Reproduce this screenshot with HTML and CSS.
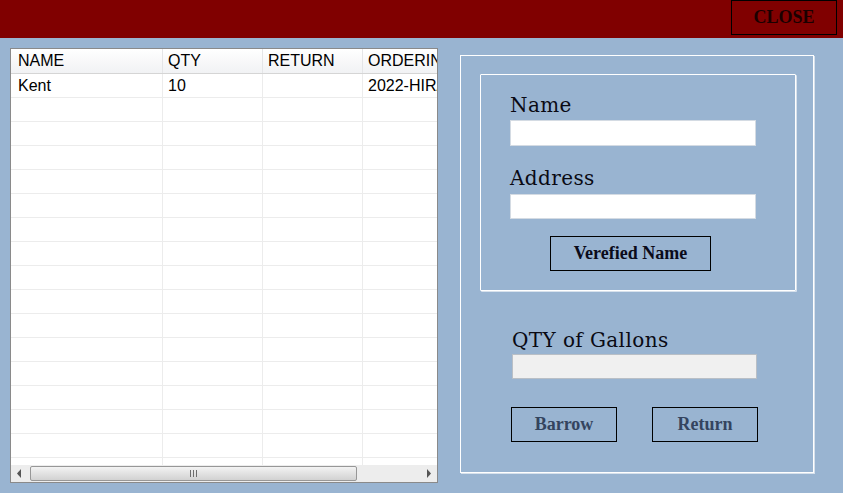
FILE: index.html
```html
<!DOCTYPE html>
<html>
<head>
<meta charset="utf-8">
<link rel="stylesheet" href="styles.css">
</head>
<body>
<header class="topbar">
  <button class="close-btn">CLOSE</button>
</header>
<main class="content">
  <div class="dgv">
    <div class="dgv-body">
      <div class="dgv-row dgv-head">
        <div class="cell first">NAME</div>
        <div class="cell">QTY</div>
        <div class="cell">RETURN</div>
        <div class="cell">ORDERING</div>
      </div>
      <div class="dgv-row"><div class="cell first">Kent</div><div class="cell">10</div><div class="cell"></div><div class="cell">2022-HIRA</div></div>
      <div class="dgv-row"><div class="cell first"></div><div class="cell"></div><div class="cell"></div><div class="cell"></div></div>
      <div class="dgv-row"><div class="cell first"></div><div class="cell"></div><div class="cell"></div><div class="cell"></div></div>
      <div class="dgv-row"><div class="cell first"></div><div class="cell"></div><div class="cell"></div><div class="cell"></div></div>
      <div class="dgv-row"><div class="cell first"></div><div class="cell"></div><div class="cell"></div><div class="cell"></div></div>
      <div class="dgv-row"><div class="cell first"></div><div class="cell"></div><div class="cell"></div><div class="cell"></div></div>
      <div class="dgv-row"><div class="cell first"></div><div class="cell"></div><div class="cell"></div><div class="cell"></div></div>
      <div class="dgv-row"><div class="cell first"></div><div class="cell"></div><div class="cell"></div><div class="cell"></div></div>
      <div class="dgv-row"><div class="cell first"></div><div class="cell"></div><div class="cell"></div><div class="cell"></div></div>
      <div class="dgv-row"><div class="cell first"></div><div class="cell"></div><div class="cell"></div><div class="cell"></div></div>
      <div class="dgv-row"><div class="cell first"></div><div class="cell"></div><div class="cell"></div><div class="cell"></div></div>
      <div class="dgv-row"><div class="cell first"></div><div class="cell"></div><div class="cell"></div><div class="cell"></div></div>
      <div class="dgv-row"><div class="cell first"></div><div class="cell"></div><div class="cell"></div><div class="cell"></div></div>
      <div class="dgv-row"><div class="cell first"></div><div class="cell"></div><div class="cell"></div><div class="cell"></div></div>
      <div class="dgv-row"><div class="cell first"></div><div class="cell"></div><div class="cell"></div><div class="cell"></div></div>
      <div class="dgv-row"><div class="cell first"></div><div class="cell"></div><div class="cell"></div><div class="cell"></div></div>
      <div class="dgv-row"><div class="cell first"></div><div class="cell"></div><div class="cell"></div><div class="cell"></div></div>
    </div>
    <div class="hscroll">
      <div class="arrow-btn">
        <svg width="5" height="9" viewBox="0 0 5 9"><path d="M4 0 L0 4.5 L4 9 Z" fill="#555"/></svg>
      </div>
      <div class="thumb">
        <svg width="7" height="7" viewBox="0 0 7 7"><path d="M0.5 0 V7 M3.5 0 V7 M6.5 0 V7" stroke="#6d6d6d" stroke-width="1"/></svg>
      </div>
      <div class="track-rest"></div>
      <div class="arrow-btn">
        <svg width="5" height="9" viewBox="0 0 5 9"><path d="M1 0 L5 4.5 L1 9 Z" fill="#555"/></svg>
      </div>
    </div>
  </div>

  <section class="panel">
    <div class="inner">
      <label class="lbl lbl-name">Name</label>
      <input class="tb tb-name" type="text">
      <label class="lbl lbl-address">Address</label>
      <input class="tb tb-address" type="text">
      <button class="btn btn-verify">Verefied Name</button>
    </div>
    <label class="lbl lbl-qty">QTY of Gallons</label>
    <input class="tb tb-qty" type="text" disabled>
    <div class="actions">
      <button class="btn btn-action">Barrow</button>
      <button class="btn btn-action btn-return">Return</button>
    </div>
  </section>
</main>
</body>
</html>
```

FILE: styles.css
```css
html, body {
  margin: 0;
  padding: 0;
}
body {
  width: 843px;
  height: 493px;
  overflow: hidden;
  background: #99b4d1;
  font-family: "Liberation Sans", Arial, sans-serif;
}
.topbar {
  height: 38px;
  background: #800000;
  display: flex;
  justify-content: flex-end;
  align-items: flex-start;
}
.close-btn {
  width: 106px;
  height: 35px;
  margin: 0 6px 0 0;
  padding: 0;
  background: transparent;
  border: 1px solid #000;
  font-family: "Liberation Serif", "Times New Roman", serif;
  font-weight: bold;
  font-size: 18px;
  color: #1a0000;
  box-sizing: border-box;
}
.content {
  display: flex;
  align-items: flex-start;
  padding: 10px 0 0 10px;
  gap: 22px;
}

/* Data grid */
.dgv {
  width: 428px;
  height: 435px;
  box-sizing: border-box;
  border: 1px solid #8a8a8a;
  background: #fff;
  display: flex;
  flex-direction: column;
  overflow: hidden;
}
.dgv-body {
  flex: 1;
  overflow: hidden;
}
.dgv-row {
  display: grid;
  grid-template-columns: 152px 100px 100px 100px;
  height: 24px;
  box-sizing: border-box;
  border-bottom: 1px solid #ececec;
  font-size: 16px;
  line-height: 23px;
  color: #000;
}
.dgv-head {
  height: 25px;
  background: linear-gradient(#ffffff, #f1f2f4);
  border-bottom: 1px solid #d5d5d5;
  line-height: 24px;
}
.cell {
  box-sizing: border-box;
  border-right: 1px solid #ececec;
  padding-left: 5px;
  white-space: nowrap;
  overflow: hidden;
}
.dgv-head .cell {
  border-right: 1px solid #e4e5e7;
}
.cell.first {
  padding-left: 7px;
}
.hscroll {
  height: 17px;
  flex: none;
  background: #ededed;
  display: flex;
  align-items: center;
}
.arrow-btn {
  width: 17px;
  height: 17px;
  display: flex;
  align-items: center;
  justify-content: center;
  flex: none;
}
.thumb {
  width: 327px;
  height: 15px;
  margin-left: 2px;
  box-sizing: border-box;
  border: 1px solid #979797;
  border-radius: 2px;
  background: linear-gradient(#f3f3f3, #e2e2e2 50%, #d2d2d2);
  display: flex;
  align-items: center;
  justify-content: center;
  flex: none;
}
.track-rest {
  flex: 1;
}

/* Right panel */
.panel {
  width: 354px;
  height: 418px;
  margin-top: 7px;
  box-sizing: border-box;
  border: 1px solid #fff;
  box-shadow: 1px 1px 0 #d7e1ec;
  padding: 18px 0 0 19px;
}
.inner {
  width: 316px;
  height: 217px;
  box-sizing: border-box;
  border: 1px solid #fff;
  box-shadow: 1px 1px 0 #d7e1ec;
  border-radius: 1px;
  padding-left: 29px;
  display: flex;
  flex-direction: column;
  align-items: flex-start;
}
.lbl {
  display: block;
  font-family: "DejaVu Serif", serif;
  font-size: 20px;
  line-height: 24px;
  letter-spacing: 0.4px;
  color: #0a0a14;
}
.lbl-name {
  margin-top: 18px;
}
.lbl-address {
  margin-top: 20px;
}
.tb {
  display: block;
  box-sizing: border-box;
  width: 246px;
  border: 1px solid #d4dbe3;
  background: #fff;
  margin: 0;
  padding: 0;
  outline: none;
}
.tb-name {
  height: 26px;
  margin-top: 3px;
}
.tb-address {
  height: 25px;
  margin-top: 4px;
}
.btn {
  box-sizing: border-box;
  background: transparent;
  border: 1px solid #000;
  padding: 0;
  font-family: "Liberation Serif", "Times New Roman", serif;
  font-weight: bold;
  font-size: 18px;
}
.btn-verify {
  width: 161px;
  height: 35px;
  margin-top: 17px;
  margin-left: 40px;
  color: #0b0b1a;
}
.lbl-qty {
  margin: 37px 0 0 32px;
}
.tb-qty {
  width: 245px;
  height: 25px;
  margin: 2px 0 0 32px;
  background: #f0f0f0;
  border: 1px solid #b9bfc6;
}
.actions {
  display: flex;
  gap: 35px;
  margin: 28px 0 0 31px;
}
.btn-action {
  width: 106px;
  height: 35px;
  color: #34445f;
}
```
